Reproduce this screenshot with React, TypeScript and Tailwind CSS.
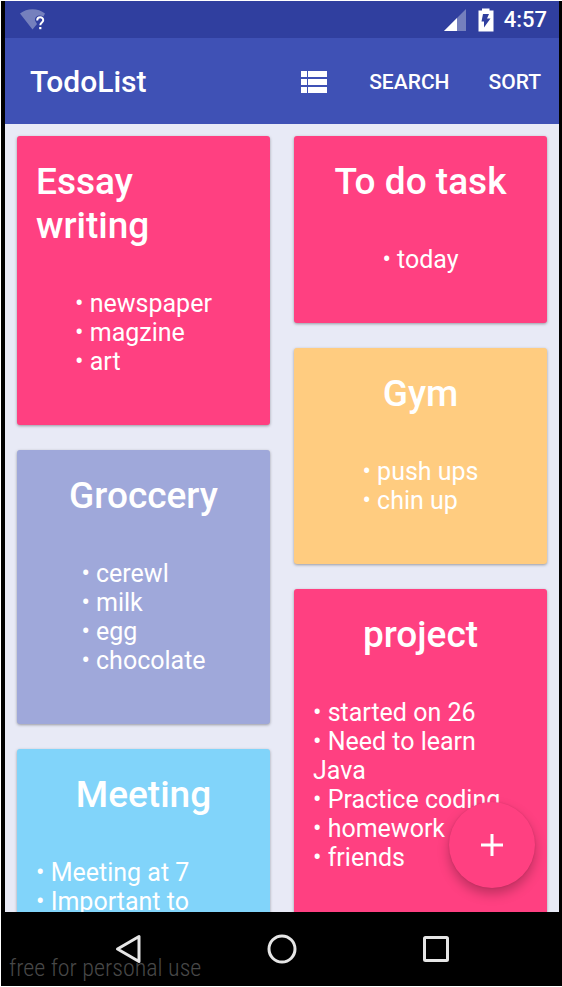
type Note = { title: string; items: string[]; tone: string; wide?: boolean };

const leftNotes: Note[] = [
  { title: "Essay writing", items: ["newspaper", "magzine", "art"], tone: "bg-[#ff4081]" },
  { title: "Groccery", items: ["cerewl", "milk", "egg", "chocolate"], tone: "bg-[#9fa8da]" },
  { title: "Meeting", items: ["Meeting at 7", "Important to"], tone: "bg-[#81d4fa]", wide: true },
];

const rightNotes: Note[] = [
  { title: "To do task", items: ["today"], tone: "bg-[#ff4081]" },
  { title: "Gym", items: ["push ups", "chin up"], tone: "bg-[#ffcc80]" },
  {
    title: "project",
    items: ["started on 26", "Need to learn Java", "Practice coding", "homework", "friends"],
    tone: "bg-[#ff4081]",
    wide: true,
  },
];

function NoteCard({ note }: { note: Note }) {
  return (
    <article
      className={`shrink-0 rounded-[3px] px-[19px] pt-6 pb-[49px] text-white shadow-[0_1px_3px_rgba(0,0,0,0.35)] last:grow ${note.tone}`}
    >
      <h2 className="mx-auto w-fit text-[37px] leading-[44px] font-medium">{note.title}</h2>
      <ul className={`mx-auto mt-[41px] text-[25px] leading-[29px] ${note.wide ? "w-full" : "w-fit"}`}>
        {note.items.map((item) => (
          <li key={item}>• {item}</li>
        ))}
      </ul>
    </article>
  );
}

function StatusBar() {
  return (
    <div className="flex h-[37px] shrink-0 items-center bg-[#303f9f] pr-3 pl-[15px] text-white">
      <svg width="26" height="22" viewBox="0 0 26 22" aria-hidden="true">
        <path d="M0 4.500C7-1.200 18-1.200 25 4.500L23.500 7.500C19 5 14.500 7.500 15 11.500L17 15L12.500 20.500Z" fill="#7580bd" />
        <path d="M17.200 11.500C17.200 7.200 23.300 7.400 23.200 11.200C23.200 13.500 20.300 13.700 20.300 16.300" fill="none" stroke="#fff" strokeWidth="2" />
        <rect x="19.200" y="18" width="2.200" height="2.200" fill="#fff" />
      </svg>
      <div className="ml-auto flex items-center">
        <svg className="mr-3" width="22" height="22" viewBox="0 0 22 22" aria-hidden="true">
          <path d="M22 0V22H0Z" fill="#7580bd" />
          <path d="M13 9V22H0Z" fill="#fff" />
        </svg>
        <svg className="mr-[10px]" width="16" height="24" viewBox="0 0 16 24" aria-hidden="true">
          <path d="M4 0.500H11.500V2.500H15.500V23.500H0.500V2.500H4Z" fill="#fff" />
          <path d="M5 6H11L9 10.500H12.500L6 19.500V13.500H3.500Z" fill="#303f9f" />
        </svg>
        <time className="text-[22px] leading-[26px] font-medium">4:57</time>
      </div>
    </div>
  );
}

function NavBar() {
  return (
    <nav className="relative flex h-[74px] shrink-0 items-center justify-center gap-[98px] bg-black">
      <p className="absolute bottom-1 left-1 font-['Roboto_Condensed',Roboto,sans-serif] text-[24px] leading-[28px] font-light text-[#484848]">
        free for personal use
      </p>
      <button type="button" aria-label="Back" className="relative flex w-14 justify-center">
        <svg width="30" height="32" viewBox="0 0 30 32" fill="none" stroke="#e6e6e6" strokeWidth="3" strokeLinejoin="round">
          <path d="M4.500 16L26 3.500V28.500Z" />
        </svg>
      </button>
      <button type="button" aria-label="Home" className="flex w-14 justify-center">
        <svg width="32" height="32" viewBox="0 0 32 32" fill="none" stroke="#e6e6e6" strokeWidth="3">
          <circle cx="16" cy="16" r="13" />
        </svg>
      </button>
      <button type="button" aria-label="Recent apps" className="flex w-14 justify-center">
        <svg width="30" height="30" viewBox="0 0 30 30" fill="none" stroke="#e6e6e6" strokeWidth="3">
          <rect x="3.500" y="3.500" width="23" height="23" rx="1" />
        </svg>
      </button>
    </nav>
  );
}

export default function App() {
  return (
    <div className="h-screen bg-white py-px pl-px font-[Roboto,sans-serif]">
      <div className="flex h-full flex-col border-r-[3px] border-l-4 border-black">
        <StatusBar />
        <header className="flex h-[86px] shrink-0 items-center bg-[#3f51b5] pt-[2px] pr-[18px] pl-[25px] text-white">
          <h1 className="text-[30px] leading-[36px] font-medium">TodoList</h1>
          <button type="button" aria-label="List view" className="mr-[42px] ml-auto">
            <svg width="26" height="22" viewBox="0 0 26 22" fill="#fff" aria-hidden="true">
              <path d="M0 0H6V6H0ZM7 0H26V6H7ZM0 8H6V14H0ZM7 8H26V14H7ZM0 16H6V22H0ZM7 16H26V22H7Z" />
            </svg>
          </button>
          <button type="button" className="mr-[39px] text-[21px] leading-[26px] font-medium">
            SEARCH
          </button>
          <button type="button" className="text-[21px] leading-[26px] font-medium">
            SORT
          </button>
        </header>
        <main className="relative min-h-0 flex-1 overflow-hidden bg-[#e8eaf6]">
          <div className="grid h-full grid-cols-2 gap-6 overflow-hidden px-3 pt-3">
            <div className="flex min-w-0 flex-col gap-[25px]">
              {leftNotes.map((note) => (
                <NoteCard key={note.title} note={note} />
              ))}
            </div>
            <div className="flex min-w-0 flex-col gap-[25px]">
              {rightNotes.map((note) => (
                <NoteCard key={note.title} note={note} />
              ))}
            </div>
          </div>
          <button
            type="button"
            aria-label="Add note"
            className="absolute right-6 bottom-6 flex size-[86px] items-center justify-center rounded-full bg-[#ff4081] shadow-[0_6px_12px_rgba(0,0,0,0.25),0_0_2px_rgba(0,0,0,0.12)]"
          >
            <svg width="22" height="22" viewBox="0 0 22 22" stroke="#fff" strokeWidth="3" aria-hidden="true">
              <path d="M11 0V22M0 11H22" />
            </svg>
          </button>
        </main>
        <NavBar />
      </div>
    </div>
  );
}
